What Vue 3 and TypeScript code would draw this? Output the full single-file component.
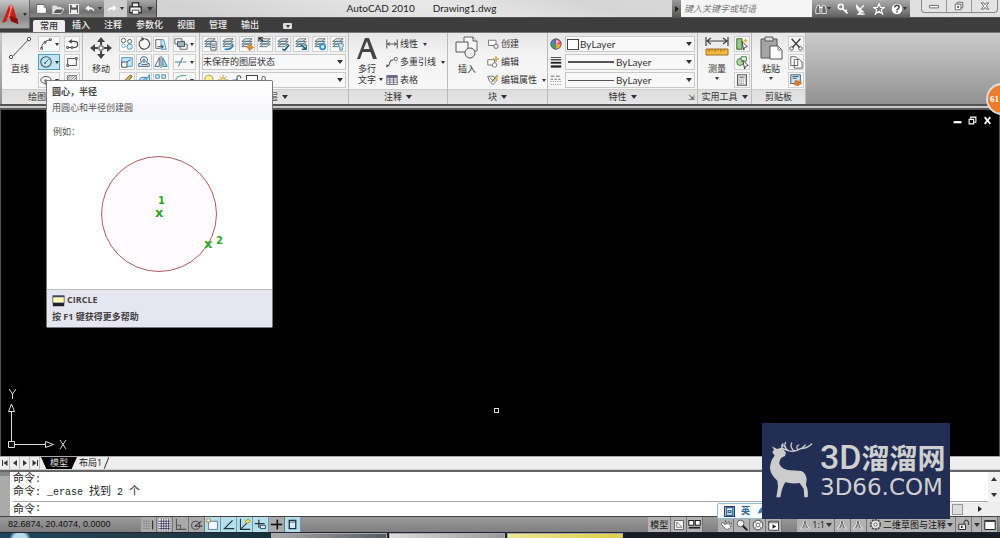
<script setup lang="ts">
import { h, ref } from 'vue'

const shapes: Record<string, string> = {
  logo: '<path d="M8 1L0 21l5-2 3-6 2 6 8 3L12 2z" fill="#c3231d"/><path d="M8 1l4 1-3 9 1 8-2-6-3 6 4-13z" fill="#f0867a"/><path d="M8 13l9 3 1 6-8-3z" fill="#8c0f10"/>',
  file: '<path d="M2 3h9l3 4v7H2z" fill="#fff" stroke="#555"/><path d="M11 3v4h3" fill="none" stroke="#777"/>',
  open: '<path d="M1 14V4h5l1 2h5v2" fill="#ddd" stroke="#eee"/><path d="M1 14l4-6h11l-4 6z" fill="#555" stroke="#fff"/>',
  save: '<path d="M2 2h12v12H2z" fill="#555" stroke="#eee" stroke-width="1.4"/><path d="M5 2h6v4H5zM4 9h8v5H4z" fill="#eee"/>',
  undo: '<path d="M7 2L1 7l6 5V9q5-1 7 4 1-8-7-8z" fill="#fff" stroke="#555" stroke-width=".7"/>',
  redo: '<path d="M9 2l6 5-6 5V9q-5-1-7 4-1-8 7-8z" fill="#fff" stroke="#bbb" stroke-width=".7"/>',
  print: '<path d="M4 6V1h8v5M1 6h14v7H1z" fill="#eee" stroke="#222" stroke-width="1.5"/><path d="M4 10h8v5H4z" fill="#fff" stroke="#222"/>',
  line: '<path d="M4 21L21 3" stroke="#555" fill="none"/><circle cx="3" cy="21" r="1.7" fill="#fff" stroke="#555"/><circle cx="21" cy="3" r="1.7" fill="#fff" stroke="#555"/>',
  arc: '<path d="M3 13Q3 5 13 3M7 6" fill="none" stroke="#444"/><path d="M2 12h2v2H2zM6 5h2v2H6zM12 2h2v2h-2z" fill="#fff" stroke="#444"/>',
  poly: '<path d="M8 3l-3 2 3 2M5 5h6a3.500 3.500 0 0 1 0 7H3" fill="none" stroke="#444" stroke-width="1.300"/><path d="M2 11h2v2H2zM7 11h2v2H7z" fill="#fff" stroke="#444"/>',
  circle: '<circle cx="8" cy="8" r="6" fill="none" stroke="#355260" stroke-width="1.200"/><path d="M7 9l4-4" stroke="#355260"/><circle cx="7" cy="9" r="1" fill="#355260"/>',
  rect: '<path d="M3 4h10v8H3z" fill="none" stroke="#444"/><path d="M2 11h2v2H2zM12 3h2v2h-2z" fill="#fff" stroke="#444"/>',
  ellipse: '<ellipse cx="8" cy="8" rx="6" ry="4" fill="none" stroke="#444"/><path d="M8 7v7M6 9h4" stroke="#444"/>',
  hatch: '<path d="M3 3h10v10H3zM3 6l3-3M3 9l6-6M3 12l9-9M5 13l8-8M9 13l4-4" fill="none" stroke="#666"/>',
  move: '<path d="M12 1L8 6h3v3h2V6h3zM12 23l4-5h-3v-3h-2v3H8zM1 12l5-4v3h3v2H6v3zM23 12l-5-4v3h-3v2h3v3z" fill="#444"/><path d="M10 10h4v4h-4z" fill="#fff" stroke="#444"/>',
  copy: '<g fill="#fff" stroke="#456"><circle cx="4" cy="4" r="2.500"/><circle cx="4" cy="10" r="2" stroke="#6aa5cb"/><circle cx="11" cy="5" r="2.300"/><circle cx="11" cy="11" r="3" fill="#d6effa" stroke="#3d87b0"/></g>',
  rotate: '<path d="M9 2a6 6 0 1 1-4 1" fill="none" stroke="#444" stroke-width="1.300"/><path d="M5 0l4 2-4 3z" fill="#444"/>',
  stretch: '<path d="M2 13V3h6M2 13h5" stroke="#555" fill="none"/><path d="M8 3h3l3 11H8z" fill="#cdeaf7" stroke="#4490b8"/><path d="M4 11h6M8 9l3 2-3 2" fill="none" stroke="#345"/>',
  draworder: '<path d="M1 2h8v6H1z" fill="#fff" stroke="#555"/><path d="M7 8h8v6H7z" fill="#fff" stroke="#555"/><path d="M4 5h8v6H4z" fill="#9bb4c0" stroke="#444"/>',
  scale: '<path d="M2 3h12v10H2z" fill="#c5e7f6" stroke="#3f8fb8"/><path d="M2 8h6v6H2z" fill="#fff" stroke="#345"/><path d="M8 8l4-3" stroke="#345"/>',
  offset: '<path d="M2 13h12v-3l-3-1q3-7-3-7T5 9L2 10z" fill="#def0f7" stroke="#456"/><path d="M5 11h7M7 8q-1-3 1-3t1 3z" fill="#fff" stroke="#358"/>',
  mirror: '<path d="M6 3v10H1z" fill="#fff" stroke="#456"/><path d="M10 3v10h5z" fill="#a5d4eb" stroke="#357a9b"/><path d="M8 1v14" stroke="#456"/>',
  trim: '<path d="M1 8h5M10 8h4M5 13L10 3" stroke="#4489a8" stroke-width="1.200"/><path d="M6 8h1M8 8h1" stroke="#333"/>',
  erase: '<path d="M3 14l3-6 6-6 2 2-6 7z" fill="#d8b35a" stroke="#65502c"/>',
  explode: '<path d="M2 12q0-8 6-7t6-3q2 8-3 10z" fill="#b8e0f2" stroke="#347da1"/><path d="M5 11l5-6M8 12l4-7" stroke="#347da1"/>',
  array: '<path d="M2 2h4v4H2zM9 2h4v4H9zM2 9h4v4H2zM9 9h4v4H9z" fill="#e0f2fa" stroke="#377fa2"/>',
  fillet: '<path d="M2 14V9q0-6 8-6h4" fill="none" stroke="#388"/><path d="M5 14h9V6" fill="none" stroke="#999"/>',
  layers: '<path d="M2 5l4-3h8l-4 3zM2 8l4-3h8l-4 3zM2 11l4-3h8l-4 3z" fill="#e2eff4" stroke="#536a74"/>',
  bulb: '<path d="M5 11Q1 8 3 4q5-5 10 0 2 4-2 7v2H5z" fill="#ffef94" stroke="#9b8430"/><path d="M6 14h4" stroke="#555" stroke-width="1.500"/>',
  sun: '<circle cx="8" cy="8" r="3" fill="#ffe377" stroke="#a68127"/><path d="M8 1v3M8 12v3M1 8h3M12 8h3M3 3l2 2M11 11l2 2M13 3l-2 2M5 11l-2 2" stroke="#a68127"/>',
  lock: '<path d="M2 8h7v6H2z" fill="#cceaf5" stroke="#456"/><path d="M8 8V4q3-4 5 0v2" fill="none" stroke="#456" stroke-width="1.500"/>',
  bigA: '<path d="M2 23L10 2h4l8 21h-4l-2.500-7h-8L5 23zM8.500 13h6L12 5z" fill="#444" fill-rule="evenodd"/>',
  linear: '<path d="M1 2v12M15 2v12M2 8h12M5 6L2 8l3 2M11 6l3 2-3 2" fill="none" stroke="#444" stroke-width="1.200"/>',
  leader: '<path d="M1 14q4-1 4-5t5-4" fill="none" stroke="#444" stroke-width="1.300"/><circle cx="13" cy="4" r="2.200" fill="#fff" stroke="#444"/><path d="M0 15l1-4 3 2z" fill="#444"/>',
  table: '<path d="M1 2h14v12H1zM1 5h14M1 8h14M1 11h14M5 2v12M10 2v12" fill="#fff" stroke="#556"/><path d="M1 2h14v3H1z" fill="#668"/>',
  insert: '<path d="M9 1h9l4 4v10H9z" fill="#f5f5f5" stroke="#666"/><path d="M18 1v4h4M1 6h12v10H1z" fill="#f5f5f5" stroke="#555"/><circle cx="15" cy="17" r="5" fill="#eee" stroke="#555"/>',
  create: '<path d="M2 3h10v7H2z" fill="#fff" stroke="#555"/><circle cx="12" cy="11" r="3" fill="#e6eef4" stroke="#446"/>',
  edit: '<path d="M1 5h9v7H1z" fill="#fff" stroke="#555"/><circle cx="10" cy="12" r="3" fill="#fff" stroke="#555"/><path d="M12 0l1 3 3 1-3 1-1 3-1-3-3-1 3-1z" fill="#eeb94e" stroke="#a5732c" stroke-width=".5"/>',
  attr: '<path d="M1 3h8l5 5-6 6-5-5z" fill="#fff" stroke="#444"/><path d="M4 5l5 5M6 11l8-10" stroke="#555" stroke-width="1.300"/><path d="M8 9l6-7 2 2-6 6z" fill="#e6b854"/>',
  wheel: '<circle cx="8" cy="8" r="7" fill="#7157a3"/><path d="M8 8V1a7 7 0 0 1 7 7z" fill="#e84a45"/><path d="M8 8h7a7 7 0 0 1-7 7z" fill="#ef9f3d"/><path d="M8 8v7a7 7 0 0 1-7-7z" fill="#3b9f6c"/><path d="M8 8H1l3-5z" fill="#4d8bc8"/><circle cx="8" cy="8" r="7" fill="none" stroke="#555"/><path d="M8 8V2l5 3z" fill="#f4bdcd"/>',
  weight: '<path d="M1 2h14" stroke="#222"/><path d="M1 5h14" stroke="#222" stroke-width="1.500"/><path d="M1 9h14" stroke="#222" stroke-width="2.500"/><path d="M1 14h14" stroke="#222" stroke-width="3"/>',
  linetype: '<path d="M1 3h14" stroke="#444" stroke-dasharray="5 2"/><path d="M1 7h14" stroke="#444" stroke-dasharray="3 2"/><path d="M1 10h14M1 14h14" stroke="#444" stroke-dasharray="1 2"/>',
  measure: '<path d="M1 1v9M23 1v9M2 5h20M6 2L2 5l4 3M18 2l4 3-4 3" fill="none" stroke="#444" stroke-width="1.200"/><path d="M1 13h22v6H1z" fill="#f5ba3d" stroke="#9a7026"/><path d="M4 13v3M7 13v2M10 13v3M13 13v2M16 13v3M19 13v2" stroke="#936a22"/>',
  selA: '<path d="M2 2h6v12H2z" fill="#99c986" stroke="#2b652a"/><path d="M8 5l6 6-3 1-1 3z" fill="#fff" stroke="#333"/><path d="M12 1l1 2 2 1-2 1-1 2-1-2-2-1 2-1z" fill="#e8b447"/>',
  selB: '<circle cx="6" cy="8" r="4" fill="#b3d9a3" stroke="#386c38"/><path d="M7 2h6v5H7z" fill="#e2efdc" stroke="#3b713b"/><path d="M9 6l6 6-3 1-1 3z" fill="#fff" stroke="#333"/>',
  calc: '<path d="M3 2h10v12H3z" fill="#eee" stroke="#555" stroke-width="1.300"/><path d="M5 4h6v2H5z" fill="#888"/><path d="M5 8h6M5 10h6M5 12h6" stroke="#777" stroke-dasharray="1 1"/>',
  paste: '<path d="M2 3h16v19H2z" fill="#a5a5a5" stroke="#555"/><path d="M6 1h8v4H6z" fill="#ddd" stroke="#555"/><path d="M11 10h8l4 4v9H11z" fill="#fff" stroke="#555"/><path d="M19 10v4h4" fill="none" stroke="#777"/>',
  cut: '<path d="M3 2l9 10M13 2L4 12" stroke="#444" stroke-width="1.700"/><circle cx="3" cy="13" r="2" fill="none" stroke="#444"/><circle cx="13" cy="13" r="2" fill="none" stroke="#444"/>',
  copies: '<path d="M2 2h6l2 2v8H2zM6 5h6l3 3v7H6z" fill="#fff" stroke="#555"/>',
  match: '<path d="M2 2h11v10H2z" fill="#cfe2ee" stroke="#357"/><path d="M4 4h7M4 6h5" stroke="#357"/><path d="M7 8l6 1 2 3-5 3-5-2z" fill="#cd7b37"/>',
  find: '<path d="M3 3h3v4l1 7H1V9zM10 3h3l2 6v5H9V7z" fill="#666" stroke="#fff"/><path d="M6 6h4" stroke="#fff" stroke-width="2"/>',
  key: '<circle cx="5" cy="5" r="3.300" fill="none" stroke="#fff" stroke-width="2"/><path d="M7 7l7 7M11 11l2-2" stroke="#fff" stroke-width="2.300"/>',
  dish: '<path d="M2 3q0 9 9 9zM7 8l5-5M7 12l-3 3h9" fill="#ddd" stroke="#fff" stroke-width="1.500"/>',
  star: '<path d="M8 1l2 5h5l-4 3 2 6-5-4-5 4 2-6-4-3h5z" fill="#777" stroke="#fff" stroke-width="1.500"/>',
  help: '<circle cx="8" cy="8" r="7" fill="#fff"/><path d="M5 6q0-3 3-3t3 3q0 1-3 3v1M8 11v2" fill="none" stroke="#444" stroke-width="1.800"/>',
  min: '<path d="M1 7h14v4H1z" fill="#fff" stroke="#666" stroke-width="1.500"/>',
  restore: '<path d="M5 2h9v9H5z" fill="#eee" stroke="#666" stroke-width="1.500"/><path d="M2 5h9v9H2z" fill="#fff" stroke="#666" stroke-width="1.500"/><path d="M5 8h3v3H5z" fill="#666"/>',
  close: '<path d="M2 3h4l2 3 2-3h4l-4 5 4 5h-4l-2-3-2 3H2l4-5z" fill="#fff" stroke="#555" stroke-width="1.300"/>',
  wmin: '<path d="M1 9h14v4H1z" fill="#fff"/>',
  wrestore: '<path d="M5 5V2h9v9h-3M2 6h8v8H2z" fill="none" stroke="#fff" stroke-width="2"/>',
  wclose: '<path d="M3 2l10 12M13 2L3 14" stroke="#fff" stroke-width="3"/>',
  cmd: '<path d="M1 2h14v9H1z" fill="#fffbb5" stroke="#457"/><path d="M1 11h14v4H1z" fill="#222"/><path d="M1 2h14v2H1z" fill="#446"/>',
  snap: '<path d="M2 4h8M2 7h8M2 10h8M2 13h8" stroke="#444" stroke-dasharray="1 2"/><path d="M13 3v11" stroke="#333" stroke-width="1.500"/>',
  grid: '<path d="M1 1h14v14H1z" fill="#f5f5ff"/><path d="M1 4h14M1 7h14M1 10h14M1 13h14M4 1v14M7 1v14M10 1v14M13 1v14" stroke="#335"/>',
  ortho: '<path d="M3 1v13h12M3 9h5v5" fill="none" stroke="#555" stroke-width="1.300"/>',
  polar: '<circle cx="7" cy="9" r="5" fill="none" stroke="#333"/><path d="M6 10l8-6M6 10h9" stroke="#222" stroke-width="1.200"/>',
  osnap: '<path d="M3 4h11v10H3z" fill="#f5fcff" stroke="#568"/><path d="M1 1h4v4H1z" fill="#fff" stroke="#a87530"/>',
  track: '<path d="M13 3L3 13h12" fill="none" stroke="#234" stroke-width="1.500"/>',
  ducs: '<path d="M3 1v13h12M3 14L12 5" fill="none" stroke="#234" stroke-width="1.300"/><path d="M9 4l4-3 2 3-4 3z" fill="#f7df58" stroke="#9b852a"/>',
  dyn: '<path d="M1 7h12M6 2v10" stroke="#234" stroke-width="1.500"/><path d="M8 9h6v4H8z" fill="#def" stroke="#234"/>',
  lwt: '<path d="M1 8h14" stroke="#111" stroke-width="2"/><path d="M9 2v12" stroke="#111" stroke-width="2"/>',
  qp: '<path d="M4 3h8v10H4z" fill="#d5edf5" stroke="#234" stroke-width="1.600"/><path d="M4 5h8" stroke="#345"/>',
  page: '<path d="M2 2h12v12H2z" fill="#f5f5f5" stroke="#444"/><path d="M5 4v7h7z" fill="#fff" stroke="#555"/>',
  views: '<path d="M1 3h6v6H1zM9 3h6v6H9z" fill="#fff" stroke="#222" stroke-width="1.300"/><path d="M1 12h14" stroke="#222" stroke-width="2"/>',
  pan: '<path d="M2 7l4 5q4 4 8-1l1-6-3 3V3L9 7 7 2v6L3 4z" fill="#fff" stroke="#555"/>',
  zoom: '<circle cx="6" cy="6" r="4.500" fill="#eee" stroke="#444"/><path d="M9 9l6 6" stroke="#222" stroke-width="2.500"/>',
  nav: '<circle cx="8" cy="8" r="6.500" fill="#eee" stroke="#666" stroke-width="1.500"/><circle cx="8" cy="8" r="2.500" fill="#fff" stroke="#555"/><path d="M3 3l3 3M13 3l-3 3M3 13l3-3M13 13l-3-3" stroke="#777"/>',
  motion: '<path d="M1 3h13v12H1z" fill="#fff" stroke="#444" stroke-width="1.300"/><path d="M1 5h13" stroke="#444"/><path d="M6 7l5 3-5 3z" fill="#222"/>',
  anno: '<path d="M8 1v8M8 8l-6 6M8 8l6 6M8 3L5 12M8 3l3 9" fill="none" stroke="#fff" stroke-width="3"/><path d="M8 1v8l-6 5M8 9l6 5M8 3L5 12M8 3l3 9" fill="none" stroke="#444"/>',
  gear: '<circle cx="8" cy="8" r="5.500" fill="#eee" stroke="#444" stroke-width="3" stroke-dasharray="2 1.500"/><circle cx="8" cy="8" r="5" fill="#eee" stroke="#666"/><circle cx="8" cy="8" r="2" fill="#fff" stroke="#444"/>',
  padlock: '<path d="M1 7h9v7H1z" fill="#eee" stroke="#333" stroke-width="1.300"/><path d="M8 7V4q3-5 6 0v4" fill="none" stroke="#444" stroke-width="1.500"/><path d="M5 9v3" stroke="#222" stroke-width="2"/>',
  clean: '<path d="M1 2h14v12H1z" fill="#fff" stroke="#222" stroke-width="1.300"/><path d="M1 3h14" stroke="#444" stroke-width="2"/>',
  moon: '<path d="M14 1Q5 2 3 12q9 1 11-11z" fill="#437fa5"/>',
  first: '<path d="M3 2v12" stroke="#333" stroke-width="2"/><path d="M13 2v12L5 8z" fill="#333"/>',
  prev: '<path d="M12 2v12L4 8z" fill="#333"/>',
  next: '<path d="M4 2v12l8-6z" fill="#333"/>',
  last: '<path d="M13 2v12" stroke="#333" stroke-width="2"/><path d="M3 2v12l8-6z" fill="#333"/>',
}

const Ico = (p: { n: string; s?: number; v?: number }) =>
  h('svg', { width: p.s ?? 12, height: p.s ?? 12, viewBox: `0 0 ${p.v ?? 16} ${p.v ?? 16}`, 'aria-hidden': 'true', innerHTML: shapes[p.n] })
Ico.props = ['n', 's', 'v']

const tabs = ['常用', '插入', '注释', '参数化', '视图', '管理', '输出']
const activeTab = ref('常用')
const drawTools = [['arc', 'poly'], ['circle', 'rect'], ['ellipse', 'hatch']]
const modifyTools = [
  ['copy', 'rotate', 'stretch', 'draworder'],
  ['scale', 'offset', 'mirror', 'trim'],
  ['erase', 'explode', 'array', 'fillet'],
]
const layerMarks = [
  '<path d="M9 5h6v10H9z" fill="#fff" stroke="#456"/><path d="M10 8h4M10 10h4M10 12h4" stroke="#456"/>',
  '<path d="M4 14q8 1 10-5" fill="none" stroke="#2981b5" stroke-width="2"/>',
  '<path d="M7 11l5-3 4 4-5 4z" fill="#d58a3e"/>',
  '<path d="M1 5V1h5M1 1l5 4" fill="none" stroke="#222" stroke-width="1.300"/>',
  '<path d="M7 14l3 1 5-6" fill="none" stroke="#1b6286" stroke-width="1.800"/>',
  '<path d="M8 9l6 5M14 9v5H9" fill="none" stroke="#1b6286" stroke-width="1.500"/>',
  '<circle cx="11" cy="11" r="3" fill="#c4edff" stroke="#3a92c1" stroke-width="2"/>',
  '<path d="M10 15v-3q-3-4 1-5 5 1 2 5v3z" fill="#c4e4f4" stroke="#537e93"/>',
]
const toggles = ref([
  { n: 'snap', t: '捕捉', on: false }, { n: 'grid', t: '栅格', on: false }, { n: 'ortho', t: '正交', on: false },
  { n: 'polar', t: '极轴', on: false }, { n: 'osnap', t: '对象捕捉', on: true }, { n: 'track', t: '对象追踪', on: true },
  { n: 'ducs', t: '动态UCS', on: true }, { n: 'dyn', t: '动态输入', on: true }, { n: 'lwt', t: '线宽', on: false },
  { n: 'qp', t: '快捷特性', on: true },
])
const command = ref('')
const search = ref('')
</script>

<template>
  <div class="app">
    <button class="appbtn" aria-label="菜单"><Ico n="logo" :s="20" :v="22" /><i class="caret s"></i></button>

    <header class="title">
      <div class="quick">
        <button aria-label="新建"><Ico n="file" :s="13" /></button>
        <button aria-label="打开"><Ico n="open" /></button>
        <button aria-label="保存"><Ico n="save" /></button>
        <button class="wide" aria-label="放弃"><Ico n="undo" /><i class="caret"></i></button>
        <button class="wide pale" aria-label="重做"><Ico n="redo" /><i class="caret"></i></button>
        <button aria-label="打印"><Ico n="print" :s="13" /></button>
        <button class="end" aria-label="自定义"><i class="caret"></i></button>
      </div>
      <div class="name"><span>AutoCAD 2010</span><span>Drawing1.dwg</span></div>
      <button class="expand" aria-label="收拢"><i class="play"></i></button>
      <input v-model="search" class="search" aria-label="搜索" placeholder="键入关键字或短语" />
      <div class="info">
        <button aria-label="查找"><Ico n="find" /><i class="caret s"></i></button>
        <button aria-label="速博"><Ico n="key" /></button>
        <button aria-label="通讯"><Ico n="dish" /></button>
        <button aria-label="收藏"><Ico n="star" /></button>
        <button aria-label="帮助"><Ico n="help" /><i class="caret s"></i></button>
      </div>
      <div class="win">
        <button aria-label="最小化"><Ico n="min" :s="10" /></button>
        <button aria-label="还原"><Ico n="restore" :s="10" /></button>
        <button class="x" aria-label="关闭"><Ico n="close" :s="10" /></button>
      </div>
    </header>

    <nav class="tabs">
      <button v-for="t in tabs" :key="t" :class="{ on: t === activeTab }" @click="activeTab = t">{{ t }}</button>
      <button class="collapse" aria-label="最小化功能区"><i class="caret"></i></button>
    </nav>

    <div class="ribbon">
      <section class="panel draw">
        <div class="body">
          <button class="big"><Ico n="line" :s="24" :v="24" /><span>直线</span></button>
          <div class="rows">
            <div v-for="r in drawTools" :key="r[0]" class="row">
              <button class="tool split" :class="{ hot: r[0] === 'circle' }" :aria-label="r[0]"><Ico :n="r[0]" :s="14" /><i class="caret s"></i></button>
              <button class="tool" :aria-label="r[1]"><Ico :n="r[1]" :s="14" /></button>
            </div>
          </div>
        </div>
        <footer>绘图 <i class="caret"></i></footer>
      </section>

      <section class="panel modify">
        <div class="body">
          <button class="big"><Ico n="move" :s="24" :v="24" /><span>移动</span></button>
          <div class="rows">
            <div v-for="r in modifyTools" :key="r[0]" class="row">
              <button v-for="(n, i) in r" :key="n" class="tool" :class="{ split: i === 3 }" :aria-label="n"><Ico :n="n" :s="14" /><i v-if="i === 3" class="caret s"></i></button>
            </div>
          </div>
        </div>
        <footer>修改 <i class="caret"></i></footer>
      </section>

      <section class="panel layer">
        <div class="body rows">
          <div class="row spread">
            <button v-for="(m, i) in layerMarks" :key="i" class="tool" :aria-label="'图层工具' + (i + 1)">
              <svg width="14" height="14" viewBox="0 0 16 16" v-html="shapes.layers + m"></svg>
            </button>
          </div>
          <div class="combo"><select aria-label="图层状态"><option>未保存的图层状态</option></select><i class="caret"></i></div>
          <div class="combo"><Ico n="bulb" /><Ico n="sun" /><Ico n="lock" /><i class="sw"></i><select aria-label="图层"><option>0</option></select><i class="caret"></i></div>
        </div>
        <footer>图层 <i class="caret"></i></footer>
      </section>

      <section class="panel note">
        <div class="body">
          <button class="big"><Ico n="bigA" :s="24" :v="24" /><span>多行<br />文字</span><i class="caret s side"></i></button>
          <div class="rows">
            <button class="item"><Ico n="linear" />线性<i class="caret s"></i></button>
            <button class="item"><Ico n="leader" />多重引线<i class="caret s"></i></button>
            <button class="item"><Ico n="table" />表格</button>
          </div>
        </div>
        <footer>注释 <i class="caret"></i></footer>
      </section>

      <section class="panel block">
        <div class="body">
          <button class="big"><Ico n="insert" :s="24" :v="24" /><span>插入</span></button>
          <div class="rows">
            <button class="item"><Ico n="create" />创建</button>
            <button class="item"><Ico n="edit" />编辑</button>
            <button class="item"><Ico n="attr" />编辑属性<i class="caret s"></i></button>
          </div>
        </div>
        <footer>块 <i class="caret"></i></footer>
      </section>

      <section class="panel props">
        <div class="body rows">
          <label class="prop"><Ico n="wheel" /><span class="combo"><i class="sw"></i><select aria-label="颜色"><option>ByLayer</option></select><i class="caret"></i></span></label>
          <label class="prop"><Ico n="weight" /><span class="combo"><i class="stroke thick"></i><select aria-label="线宽"><option>ByLayer</option></select><i class="caret"></i></span></label>
          <label class="prop"><Ico n="linetype" /><span class="combo"><i class="stroke"></i><select aria-label="线型"><option>ByLayer</option></select><i class="caret"></i></span></label>
        </div>
        <footer>特性 <i class="caret"></i><b class="launch">⇲</b></footer>
      </section>

      <section class="panel util">
        <div class="body">
          <button class="big"><Ico n="measure" :s="24" :v="24" /><span>测量</span><i class="caret s"></i></button>
          <div class="rows">
            <button class="tool" aria-label="快速选择"><Ico n="selA" :s="14" /></button>
            <button class="tool" aria-label="全部选择"><Ico n="selB" :s="14" /></button>
            <button class="tool" aria-label="计算器"><Ico n="calc" :s="14" /></button>
          </div>
        </div>
        <footer>实用工具 <i class="caret"></i></footer>
      </section>

      <section class="panel clip">
        <div class="body">
          <button class="big"><Ico n="paste" :s="24" :v="24" /><span>粘贴</span><i class="caret s"></i></button>
          <div class="rows">
            <button class="tool" aria-label="剪切"><Ico n="cut" :s="14" /></button>
            <button class="tool" aria-label="复制"><Ico n="copies" :s="14" /></button>
            <button class="tool" aria-label="特性匹配"><Ico n="match" :s="14" /></button>
          </div>
        </div>
        <footer>剪贴板</footer>
      </section>
    </div>

    <main class="canvas">
      <div class="docwin">
        <button aria-label="最小化图形"><Ico n="wmin" :s="9" /></button>
        <button aria-label="还原图形"><Ico n="wrestore" :s="9" /></button>
        <button aria-label="关闭图形"><Ico n="wclose" :s="9" /></button>
      </div>
      <i class="pick"></i>
      <svg class="ucs" width="68" height="70" viewBox="0 0 68 70" fill="none" stroke="#ddd">
        <path d="M9.500 55V25M13 58.500h30M6.500 55.500h6v6h-6zM6.500 25.500h6L9.500 18zM43.500 55.500v6l8-3zM7 3l3.500 5L14 3M10.500 8v5M58 54l6 9M64 54l-6 9" />
      </svg>
    </main>

    <div class="layouts">
      <button class="nav" aria-label="第一个"><Ico n="first" :s="8" /></button>
      <button class="nav" aria-label="上一个"><Ico n="prev" :s="8" /></button>
      <button class="nav" aria-label="下一个"><Ico n="next" :s="8" /></button>
      <button class="nav" aria-label="最后一个"><Ico n="last" :s="8" /></button>
      <button class="model">模型</button>
      <button class="sheet">布局1</button>
      <i class="slash"></i>
    </div>

    <div class="console">
      <div class="grip"></div>
      <div class="cmds">
        <div class="log">
          <p>命令<em>:</em></p>
          <p>命令<em>: _erase </em>找到<em> 2 </em>个</p>
        </div>
        <label class="prompt">命令<em>:</em><input v-model="command" aria-label="命令行" /></label>
      </div>
      <div class="vbar"><i class="up"></i><i class="caret"></i></div>
      <div class="hbar"><i class="thumb"></i><i class="play"></i></div>
    </div>

    <div class="status">
      <span class="coords">82.6874,    20.4074,   0.0000</span>
      <div class="toggles">
        <button v-for="t in toggles" :key="t.n" :class="{ on: t.on }" :aria-label="t.t" @click="t.on = !t.on"><Ico :n="t.n" :s="13" /></button>
      </div>
      <div class="right">
        <button class="txt">模型</button>
        <button aria-label="布局"><Ico n="page" /></button>
        <button aria-label="快速查看"><Ico n="views" :s="13" /></button>
        <i class="gap"></i>
        <button aria-label="平移"><Ico n="pan" /></button>
        <button aria-label="缩放"><Ico n="zoom" /></button>
        <button aria-label="控制盘"><Ico n="nav" /></button>
        <button aria-label="运动"><Ico n="motion" /></button>
        <i class="gap"></i>
        <button class="txt scale"><Ico n="anno" />1:1<i class="caret"></i></button>
        <button aria-label="注释可见性"><Ico n="anno" /></button>
        <button aria-label="自动比例"><Ico n="anno" /></button>
        <button class="txt space"><Ico n="gear" :s="13" />二维草图与注释<i class="caret"></i></button>
        <button aria-label="锁定"><Ico n="padlock" /></button>
        <button class="thin" aria-label="状态栏菜单"><i class="caret"></i></button>
        <button aria-label="全屏显示"><Ico n="clean" /></button>
      </div>
    </div>

    <div class="taskbar"><i class="start"></i><i class="t1"></i><i class="t2"></i><i class="t3"></i><i class="rest"></i></div>

    <aside class="tip" role="tooltip">
      <div class="head"><strong>圆心，半径</strong><span>用圆心和半径创建圆</span></div>
      <div class="demo">
        <p>例如：</p>
        <svg viewBox="0 0 225 150" font-family="DejaVu Sans, sans-serif" font-weight="bold" font-size="10" fill="#32a51e">
          <circle cx="112" cy="75" r="57.500" fill="#fffaff" stroke="#b25b5b" />
          <text x="111" y="65">1</text><text x="108" y="78" font-size="13">x</text><text x="157" y="109" font-size="13">x</text><text x="169" y="105">2</text>
        </svg>
      </div>
      <div class="foot"><strong><Ico n="cmd" :s="13" />CIRCLE</strong><strong>按 F1 键获得更多帮助</strong></div>
    </aside>

    <div class="ime"><b>回</b><span>英</span><Ico n="moon" :s="10" /></div>

    <div class="brand">
      <svg class="deer" width="45" height="58" viewBox="20 54 135 174">
        <path d="M31 70l17 8 14-5 12 17-3 9-11 5q-12 16 0 27 9 10 28 11l32 2q14 5 16 25l-2 17q8 17 5 37h-10l-2-26-12-17q-23 3-43-2-10 14-15 45H45l5-32-2-18Q28 156 26 136q1-25 14-38l-7-11 5-7z" fill="#ccc" />
        <path d="M65 77q28 16 53 0 18 0 33-14M82 84Q64 71 73 58M100 85Q84 73 91 60M110 81q-8-11 2-15M120 77l12-11M63 76q-4-9 2-14M73 72l-7-4" fill="none" stroke="#ccc" stroke-width="4" stroke-linecap="round" />
      </svg>
      <div class="words"><div><b>3D</b>溜溜网</div><span>3D66.COM</span></div>
    </div>
    <div class="ball">61</div>
  </div>
</template>

<style>
body { margin: 0; }
</style>

<style scoped>
.app {
  position: relative; display: flex; flex-direction: column; min-height: 100vh; overflow: hidden;
  font: 9px/12px "Open Sans", "Noto Sans CJK SC", sans-serif; color: #333; background: #444;
}
.app * { box-sizing: border-box; }
button { font: inherit; color: inherit; border: 0; padding: 0; margin: 0; background: none; display: flex; align-items: center; justify-content: center; }
select, input { font: inherit; color: inherit; border: 0; padding: 0; margin: 0; background: none; outline: 0; appearance: none; min-width: 0; }
svg { display: block; flex: none; }
p { margin: 0; }
em { font: 10px/12px "Liberation Mono", monospace; white-space: pre; }
.caret { display: inline-block; flex: none; width: 0; height: 0; border: 3px solid transparent; border-top: 4px solid #333; border-bottom: 0; }
.caret.s { border-width: 2px; border-top-width: 3px; border-bottom: 0; }
.play { width: 0; height: 0; border: 3px solid transparent; border-left: 4px solid #222; border-right: 0; }

.appbtn { position: absolute; z-index: 2; left: 0; top: 0; width: 30px; height: 29px; gap: 1px; background: linear-gradient(#c6c6c6, #888 60%, #aaa); border: 1px solid #666; border-width: 0 1px 1px 0; }
.title { display: flex; height: 18px; padding-left: 30px; background: linear-gradient(15deg, #d2d2d2 20%, #e8e8e8 45%, #d5d5d5 60%, #e4e4e4); border-bottom: 1px solid #555; }
.quick { display: flex; width: 127px; padding-left: 3px; background: linear-gradient(#aaa, #707070 70%, #888); border-right: 1px solid #444; }
.quick button { width: 17px; }
.quick .wide { width: 22px; gap: 2px; }
.quick .wide .caret { border-width: 2px; border-top-width: 3px; border-bottom: 0; }
.quick .pale { width: 24px; background: #ccc; }
.quick .end { width: 13px; }
.name { flex: 1; display: flex; justify-content: center; gap: 18px; padding-left: 14px; font: 10px/17px Lato, sans-serif; color: #222; }
.expand { width: 9px; background: linear-gradient(#999, #555); }
.search { width: 131px; padding: 1px 3px; background: #f5f5f5; font-style: italic; }
.search::placeholder { color: #777; opacity: 1; }
.info { display: flex; justify-content: space-between; width: 98px; padding: 0 3px; background: linear-gradient(#aaa, #606060); }
.win { display: flex; width: 77px; margin: 0 2px 4px 11px; border: 1px solid #888; border-top: 0; border-radius: 0 0 4px 4px; background: #e4e4e4; }
.win button { width: 25px; border-right: 1px solid #999; }
.win .x { flex: 1; border: 0; }

.tabs { display: flex; height: 14px; padding-left: 33px; background: #3d3d3d; color: #eee; font-weight: 500; line-height: 14px; }
.tabs button { padding: 0 7px; min-width: 32px; }
.tabs .on { margin-top: 2px; background: #eee; color: #333; border-radius: 2px 2px 0 0; }
.tabs .collapse { min-width: 9px; width: 9px; height: 6px; padding: 0; margin: 5px 0 0 17px; background: #ddd; border-radius: 1px; }
.collapse .caret { border-width: 2px; border-top-width: 3px; border-bottom: 0; }

.ribbon { display: grid; grid-template-columns: 81px 117px 149px 99px 100px 150px 54px 54px 1fr; height: 78px; padding-left: 2px; border-bottom: 6px double #555; background: linear-gradient(#cbcbcb, #929292); border-top: 1px solid #777; }
.panel { display: flex; flex-direction: column; background: linear-gradient(#e6e6e6, #f3f3f3 30%, #f9f9f9); border-right: 1px solid #bbb; min-width: 0; }
.body { flex: 1; display: flex; padding: 3px 2px 0; }
.body > .rows { flex: 1; min-width: 0; }
.rows { display: flex; flex-direction: column; gap: 2px; }
.row { display: flex; gap: 1px; }
.spread { justify-content: space-between; }
.panel footer { display: flex; align-items: center; justify-content: center; gap: 4px; height: 15px; background: linear-gradient(#ddd, #e6e6e6); border-top: 1px solid #ccc; white-space: nowrap; }
.tool { width: 16px; height: 16px; background: #f8f8f8; border: 1px solid #d0d0d0; }
.split { width: 23px; gap: 2px; justify-content: flex-start; }
.hot { background: #c0e4f2; border-color: #4f9cbc; }
.big { flex-direction: column; justify-content: flex-start; line-height: 11px; }
.big span { margin-top: 3px; }
.big .caret { margin-top: 3px; }
.draw .big { width: 32px; margin-right: 2px; }
.draw .row { gap: 4px; }
.modify .big { width: 32px; margin-right: 2px; }
.modify .split { margin-left: 3px; }
.note .big { width: 32px; position: relative; margin-right: 3px; }
.note .side { position: absolute; right: 0; top: 39px; }
.block .big, .util .big, .clip .big { width: 34px; }
.block .rows { padding-left: 3px; }
.item { height: 16px; justify-content: flex-start; gap: 2px; white-space: nowrap; }
.item .caret { margin-left: 3px; }
.combo { flex: 1; display: flex; align-items: center; height: 16px; min-width: 0; background: #f8f8f8; border: 1px solid #c9c9c9; padding-right: 2px; }
.layer .combo { flex: none; gap: 2px; }
.combo select { flex: 1; height: 14px; line-height: 14px; }
.props select { font-family: Lato, sans-serif; font-size: 10px; }
.sw { width: 12px; height: 11px; border: 1px solid #444; background: #fff; margin: 0 1px; }
.stroke { width: 46px; height: 1px; background: #555; margin: 0 2px; }
.thick { background: #000; outline: 1px solid #555; outline-offset: -1px; height: 2px; }
.prop { display: flex; align-items: center; gap: 3px; }
.props footer { position: relative; }
.launch { position: absolute; right: 2px; font-weight: 400; font-size: 8px; }
.util .body, .clip .body { padding-right: 0; }

.canvas { position: relative; flex: 1; background: #000; border-left: 1px solid #555; border-right: 1px solid #555; }
.docwin { display: flex; justify-content: flex-end; gap: 6px; padding: 6px 7px 0; }
.pick { position: absolute; top: 86%; left: calc(50% - 6px); width: 5px; height: 5px; border: 1px solid #ddd; }
.ucs { position: absolute; left: 1px; bottom: 0; }

.layouts { display: flex; height: 14px; background: #eee; border-top: 1px solid #aaa; border-bottom: 1px solid #ccc; }
.nav { width: 10px; border-right: 1px solid #bbb; }
.model { width: 36px; margin-left: 1px; background: #000; color: #ddd; clip-path: polygon(0 0, 100% 0, 85% 100%, 15% 100%); }
.sheet { width: 27px; color: #222; }
.slash { width: 1px; height: 12px; margin-left: 2px; background: #333; transform: rotate(22deg); }

.console { display: grid; grid-template-columns: 10px 1fr 12px; grid-template-rows: 30px 14px; height: 46px; border-top: 2px solid #666; background: #fff; font-size: 11px; line-height: 12px; color: #222; }
.grip { grid-row: 1 / 3; background: linear-gradient(#888 4px, #aaa 4px); }
.cmds { grid-row: 1 / 3; grid-column: 2; padding-left: 3px; }
.log { height: 30px; border-bottom: 1px solid #aaa; }
.log p { height: 13px; }
.prompt { display: flex; align-items: center; height: 14px; }
.prompt input { flex: 1; }
.vbar { display: flex; flex-direction: column; align-items: center; justify-content: space-between; padding: 5px 0; background: #f1f1f1; }
.up { width: 0; height: 0; border: 3px solid transparent; border-bottom: 4px solid #333; border-top: 0; }
.hbar { grid-row: 2; grid-column: 2 / 4; justify-self: end; width: 52px; padding-right: 18px; display: flex; align-items: center; justify-content: space-between; background: #eee; }
.thumb { width: 11px; height: 11px; border: 1px solid #999; background: #ddd; margin-left: 4px; }

.status { display: flex; align-items: center; height: 16px; border-top: 1px solid #444; background: linear-gradient(#9b9b9b, #7f7f7f); color: #111; }
.coords { width: 141px; padding-left: 8px; font: 9px/15px "Liberation Sans", sans-serif; white-space: pre; }
.toggles { display: flex; }
.toggles button { width: 16px; height: 15px; background: #aaa; border: 1px solid #777; border-width: 0 1px 0 0; }
.toggles .on { background: #b5dfea; border-color: #6c9eab; }
.right { display: flex; margin-left: auto; padding-right: 2px; }
.right button { width: 16px; height: 15px; background: #b2b2b2; border: 1px solid #777; border-width: 0 1px 0 0; }
.right .txt { width: auto; padding: 0 2px; gap: 1px; }
.right .thin { width: 10px; }
.gap { width: 15px; }

.taskbar { display: flex; height: 6px; background: #172630; border-top: 1px solid #223; }
.start { width: 271px; background: radial-gradient(circle at 20px 7px, #b8dbed 0 7px, transparent 11px), linear-gradient(90deg, #1d4560, #233d4a 50%, #15303d); }
.t1, .t2, .t3 { width: 116px; margin-right: 2px; border: 1px solid #aaa; border-bottom: 0; background: linear-gradient(90deg, #aaa, #555c62); }
.t2 { background: linear-gradient(90deg, #ddd, #999); }
.t3 { background: linear-gradient(90deg, #eee591, #ddce48); }
.rest { flex: 1; background: #171c23; }

.tip { position: absolute; z-index: 3; left: 46px; top: 80px; width: 227px; border: 1px solid #777; border-radius: 2px; background: #fff; color: #555; overflow: hidden; }
.head { display: flex; flex-direction: column; gap: 4px; padding: 5px 5px 6px; background: linear-gradient(#fff, #f5f6fa); }
.tip strong { color: #444; }
.demo p { padding: 6px 6px 0; }
.demo svg { width: 100%; margin-top: 1px; }
.foot { display: flex; flex-direction: column; gap: 4px; padding: 4px 5px; background: #e6e6f1; border-top: 1px solid #bbb; }
.foot strong { display: flex; gap: 2px; white-space: pre; }

.ime { position: absolute; z-index: 1; right: 170px; bottom: 19px; width: 113px; height: 16px; display: flex; align-items: center; gap: 6px; padding-left: 6px; border: 1px solid #8fbcd5; border-radius: 2px; background: #f8fcff; color: #2d688e; font-weight: 700; }
.ime b { border: 1px solid #337; line-height: 9px; }
.brand { position: absolute; z-index: 2; right: 50px; bottom: 19px; width: 188px; height: 96px; display: flex; align-items: flex-start; gap: 7px; padding: 18px 5px 0 6px; background: #222e54; color: #d0d0d0; }
.words { font: 700 28px/32px "Noto Sans CJK SC", sans-serif; white-space: nowrap; }
.words b { font: 500 34px/32px Roboto, sans-serif; }
.words span { display: block; font: 400 23px/28px "DejaVu Sans", sans-serif; }
.ball { position: absolute; z-index: 2; left: calc(100% - 14px); top: 83px; width: 32px; height: 32px; padding-left: 2px; border: 2px solid #ddd; border-radius: 50%; background: #ed7d2b; color: #fff; font: bold 9px/28px "Liberation Serif", serif; }
</style>
